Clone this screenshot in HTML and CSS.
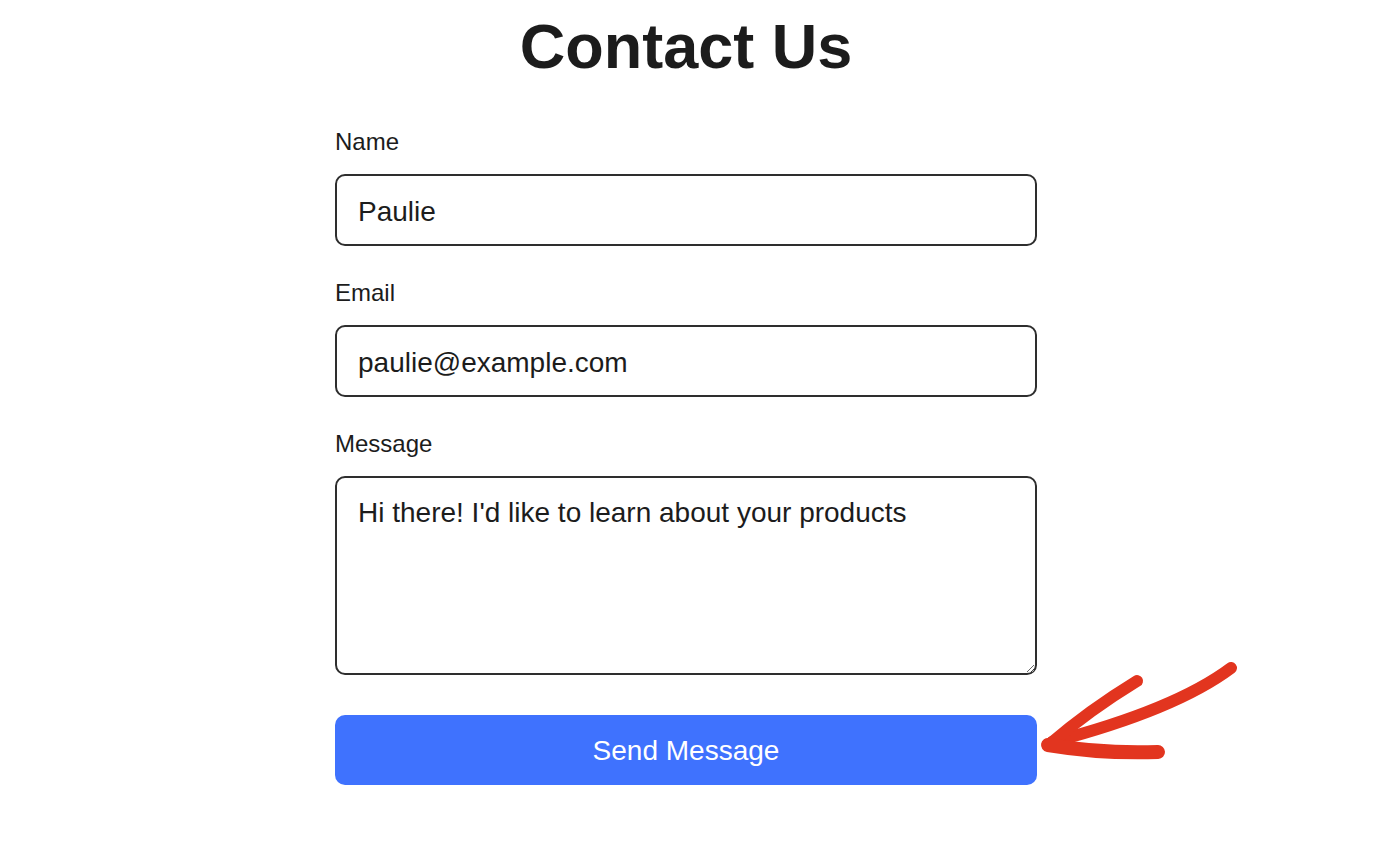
FILE: index.html
```html
<!DOCTYPE html>
<html lang="en">
<head>
  <meta charset="UTF-8">
  <meta name="viewport" content="width=device-width, initial-scale=1.0">
  <title>Contact Us</title>
  <link rel="stylesheet" href="styles.css">
</head>
<body>
  <main class="page">
    <h1 class="title">Contact Us</h1>

    <!-- Contact form -->
    <form class="contact-form" onsubmit="return false;">
      <div class="field">
        <label for="name">Name</label>
        <input id="name" type="text" value="Paulie">
      </div>
      <div class="field">
        <label for="email">Email</label>
        <input id="email" type="email" value="paulie@example.com">
      </div>
      <div class="field">
        <label for="message">Message</label>
        <textarea id="message">Hi there! I'd like to learn about your products</textarea>
      </div>
      <div class="actions">
        <button type="submit" class="send">Send Message</button>
        <!-- hand-drawn pointer next to the button -->
        <svg class="pointer" width="220" height="110" viewBox="0 0 220 110" aria-hidden="true">
          <g fill="none" stroke="#e2351f" stroke-linecap="round" stroke-linejoin="round">
            <path d="M201 13 C 165 40, 110 64, 22 87" stroke-width="12"/>
            <path d="M107 26 Q 58 56, 20 89" stroke-width="12"/>
            <path d="M18 90 Q 72 99, 128 97" stroke-width="14"/>
          </g>
        </svg>
      </div>
    </form>
  </main>
</body>
</html>
```

FILE: styles.css
```css
/* Base */
html, body {
  margin: 0;
  padding: 0;
  background: #fff;
  color: #1c1c1c;
  font-family: "Liberation Sans", Arial, sans-serif;
}

/* Heading and form share one column */
.page {
  width: 702px;
  margin-left: 335px;
  padding-top: 8px;
}

.title {
  margin: 0;
  font-size: 63px;
  line-height: 77px;
  font-weight: 700;
  text-align: center;
}

.contact-form {
  margin-top: 42px;
}

.field {
  margin-bottom: 32px;
}

.field label {
  display: block;
  font-size: 24px;
  line-height: 30px;
  margin-bottom: 17px;
}

.field input,
.field textarea {
  display: block;
  box-sizing: border-box;
  width: 100%;
  border: 2px solid #2e2e2e;
  border-radius: 10px;
  background: #fff;
  color: #1c1c1c;
  font-family: "Liberation Sans", Arial, sans-serif;
  font-size: 28px;
  outline: none;
}

.field input {
  height: 72px;
  padding: 3px 21px 0;
}

.field textarea {
  height: 199px;
  padding: 18px 21px 14px;
  line-height: 34px;
  resize: vertical;
}

.actions {
  position: relative;
  margin-top: 40px;
}

.send {
  display: block;
  width: 100%;
  height: 70px;
  padding-top: 2px;
  border: none;
  border-radius: 10px;
  background: #3f72fe;
  color: #fff;
  font-family: "Liberation Sans", Arial, sans-serif;
  font-size: 28px;
  cursor: pointer;
}

.pointer {
  position: absolute;
  left: 695px;
  top: -60px;
}
```
